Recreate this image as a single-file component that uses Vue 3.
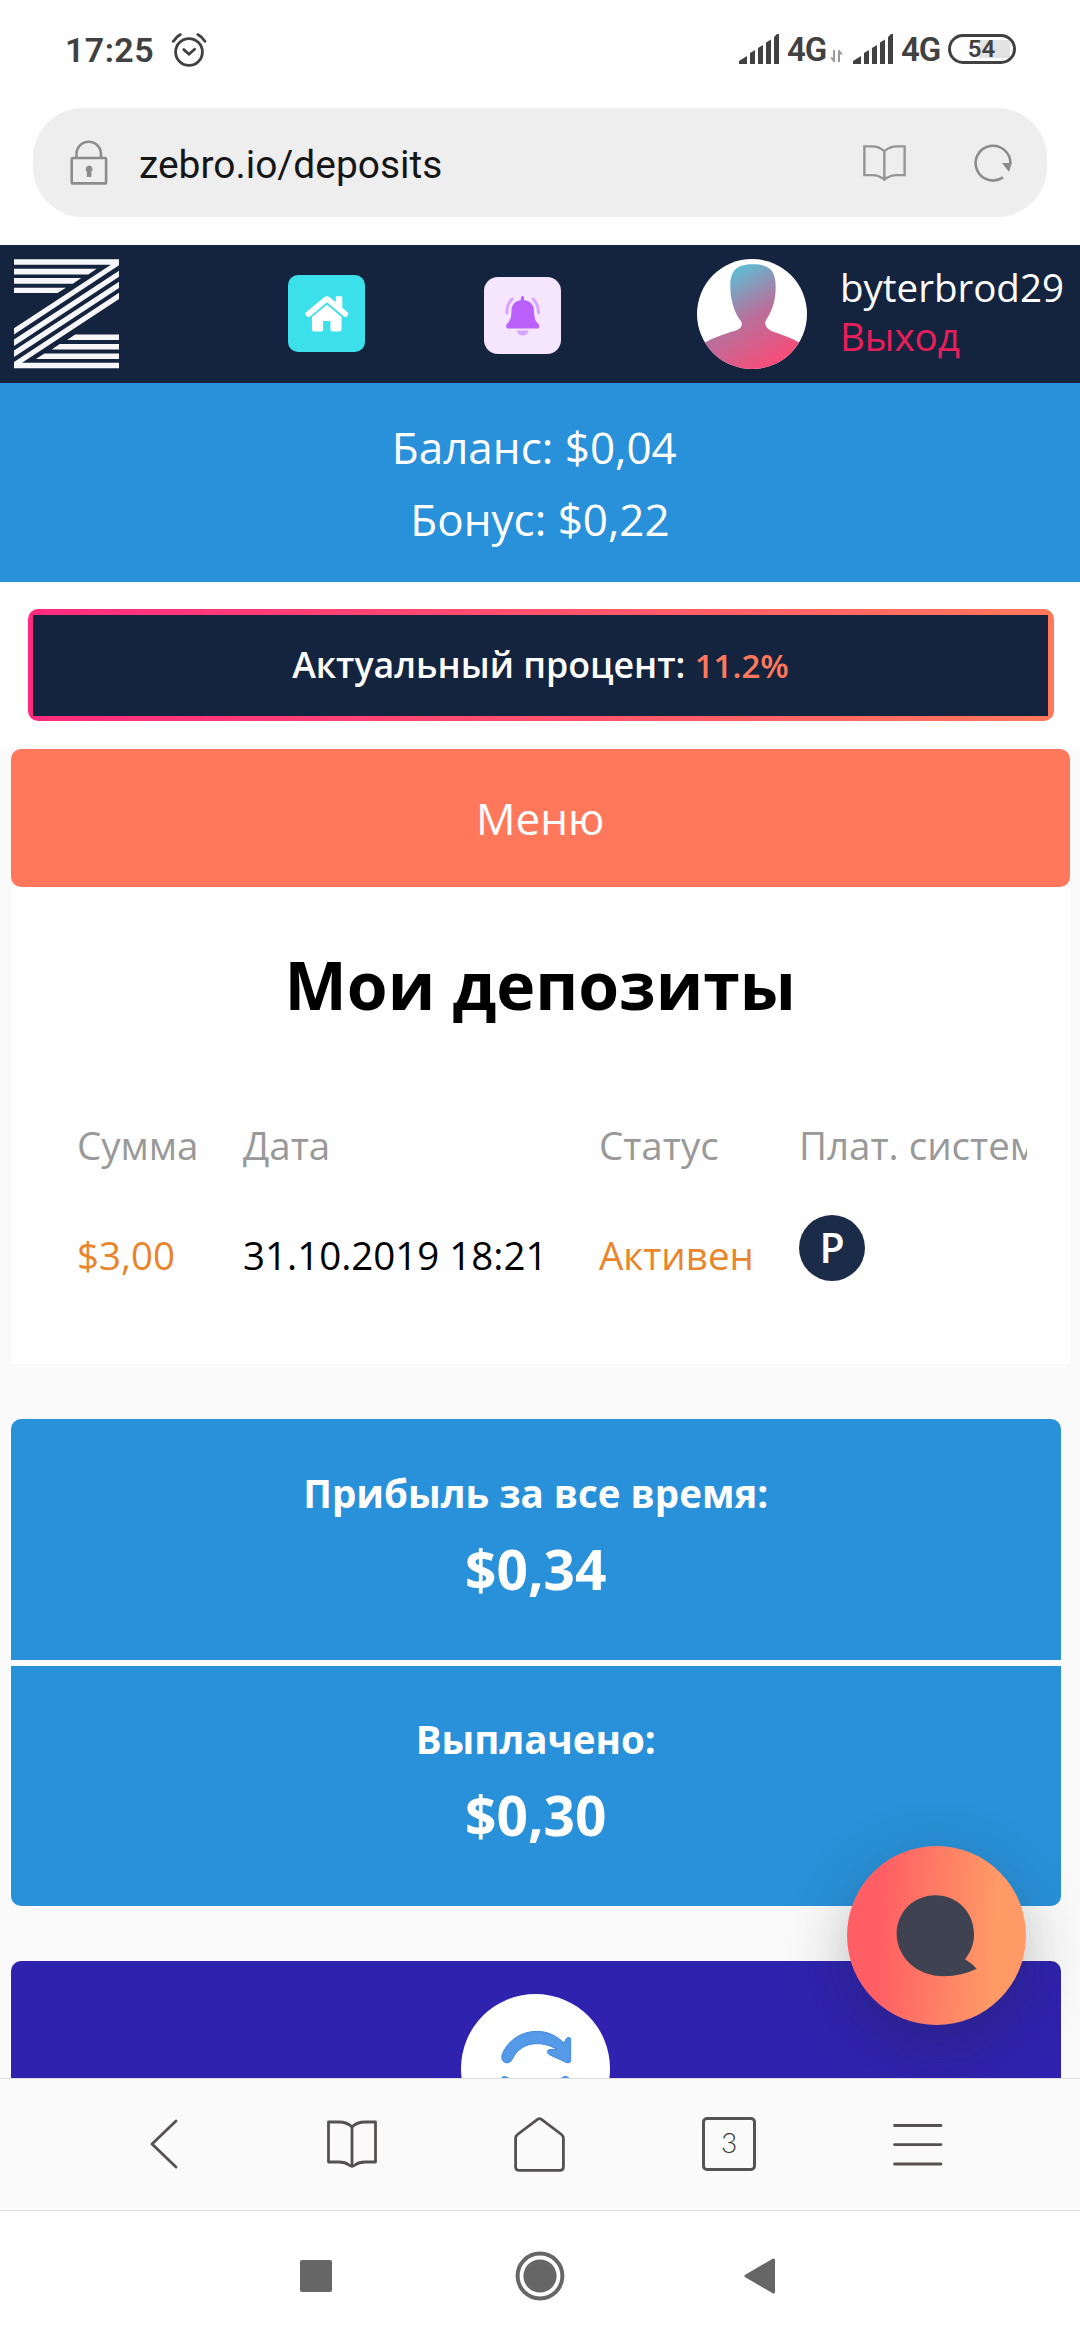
<script setup>

import { ref } from 'vue'

const user = ref({
    name: 'byterbrod29',
    balance: '$0,04',
    bonus: '$0,22',
})

const percent = ref('11.2%')

const titres = ['Сумма', 'Дата', 'Статус', 'Плат. система']

const deposits = ref([
    { sum: '$3,00', date: '31.10.2019 18:21', status: 'Активен' },
])

const stats = ref([
    { label: 'Прибыль за все время:', value: '$0,34' },
    { label: 'Выплачено:', value: '$0,30' },
])

</script>

<template>

<div class="phone">
    <div class="status">
        <span class="time">17:25</span>
        <svg class="alarm" width="36" height="36" viewBox="0 0 36 36">
            <circle cx="18" cy="20" r="13.4" />
            <path d="M12.8 17.6 L18 22.2 L23.6 17.2" />
            <path d="M2.2 9.4 Q5 5 9.4 2.6 M26.8 2.6 Q31.4 5 34 9.4" />
        </svg>
        <div class="status__right">
            <template v-for="n in 2" :key="n">
                <svg class="signal" width="40" height="30" viewBox="0 0 40 30">
                    <path d="M0 30 V27 L8 22 V30Z M11 30 V19 L16 16 V30Z M19 30 V14 L24 11 V30Z M27 30 V8.5 L32 5.5 V30Z M35 30 V3 L38 0 H40 V30Z" />
                </svg>
                <span class="net">4G</span>
                <svg v-if="n === 1" class="updown" width="13" height="12" viewBox="0 0 13 12">
                    <path d="M5 0 V12 H3.6 L0 7.6 H3 V0Z M8 12 V0 H9.4 L13 4.4 H10 V12Z" />
                </svg>
            </template>
            <div class="battery">54</div>
        </div>
    </div>

    <div class="url">
        <svg class="lock" width="38" height="45" viewBox="0 0 38 45">
            <path d="M6.5 18 V14 A12.2 12.2 0 0 1 31 14 V18" />
            <rect x="1.7" y="18" width="34.4" height="25.4" rx="1" />
            <path class="plein" d="M19 25.5 a3.6 3.6 0 0 1 2.4 6.2 V37 h-4.6 v-5.3 A3.6 3.6 0 0 1 19 25.5Z" />
        </svg>
        <span class="url__text">zebro.io/deposits</span>
        <svg class="url__book" width="43" height="36" viewBox="938 436 125 109" preserveAspectRatio="none">
            <path d="M942 440 H965 Q985 440 1000 455 Q1015 440 1037 440 H1059 V527 H1037 Q1015 527 1000 541 Q985 527 965 527 H942Z M1000 455 V541" />
        </svg>
        <svg class="url__reload" width="40" height="40" viewBox="0 0 40 40">
            <path d="M37.4 21 A17.4 17.4 0 1 0 30 34.4" />
            <path class="plein" d="M29 20 H38.8 L36 29Z" />
        </svg>
    </div>

    <div class="page">
        <header>
            <svg class="logo" width="105" height="110" viewBox="38 70 273 329" preserveAspectRatio="none">
                <path d="M38 71 H311 V89 L38 296 V277 L290 87 H38Z" />
                <path d="M38 99 H253 L231 116 H38Z M38 127 H213 L191 144 H38Z M38 156 H173 L151 172 H38Z" />
                <path d="M311 105 V123 L38 330 V311Z M311 138 V157 L38 363 V344Z" />
                <path d="M311 171 V190 L59 380 H311 V397 H38 V378Z" />
                <path d="M311 296 V312 H176 L197 296Z M311 324 V341 H136 L157 324Z M311 353 V369 H95 L117 353Z" />
            </svg>
            <div class="btn btn--home">
                <svg width="43.5" height="35.5" viewBox="792 182 113 106" preserveAspectRatio="none">
                    <path d="M849 208 L887 245 V282 Q887 288 881 288 H863 Q858 288 858 283 V257 H839 V283 Q839 288 834 288 H816 Q810 288 810 282 V245Z" />
                    <path d="M842 186 Q849 180 856 186 L872 201 V186 Q872 183 875 183 H886 Q889 183 889 186 V217 L903 231 Q907 235 903 239 L901 243 Q897 247 893 243 L849 201 L805 243 Q800 247 797 243 L794 239 Q790 235 794 231Z" />
                </svg>
            </div>
            <div class="btn btn--bell">
                <svg width="35" height="39.5" viewBox="1319 182 92 118" preserveAspectRatio="none">
                    <path fill="#d7a5fd" d="M1350 285 H1381 Q1378 300 1365 300 Q1353 300 1350 285Z" />
                    <path fill="none" stroke="#d7a5fd" stroke-width="8" stroke-linecap="round" d="M1338 191 Q1323 207 1324 233 M1393 191 Q1407 207 1407 233" />
                    <path fill="#bb60fa" d="M1361 194 V187 Q1361 182 1365 182 Q1369 182 1369 187 V194 Q1395 198 1395 226 Q1395 255 1406 264 Q1409 267 1409 272 Q1409 279 1402 279 H1330 Q1322 279 1322 272 Q1322 267 1325 264 Q1336 255 1336 226 Q1336 198 1361 194Z" />
                </svg>
            </div>
            <svg class="avatar" width="110" height="110" viewBox="291 72 330 330">
                <defs>
                    <linearGradient id="peau" gradientUnits="userSpaceOnUse" x1="385" y1="100" x2="545" y2="375">
                        <stop offset="0" stop-color="#56c3d8" />
                        <stop offset="0.5" stop-color="#b8709c" />
                        <stop offset="1" stop-color="#f84c78" />
                    </linearGradient>
                </defs>
                <path fill="url(#peau)" d="M291 338 C340 305 375 298 400 289 C422 282 431 271 423 259 C400 228 391 190 391 155 C391 105 410 88 459 88 C508 88 527 105 527 155 C527 200 515 230 498 255 C491 268 500 283 520 290 C550 300 585 311 621 338 V402 H291Z" />
            </svg>
            <div class="user">
                <div>{{ user.name }}</div>
                <div class="exit">Выход</div>
            </div>
        </header>

        <div class="balance">
            <div>Баланс: {{ user.balance }}&nbsp;</div>
            <div>Бонус: {{ user.bonus }}</div>
        </div>

        <div class="percent">
            <div class="percent__in">Актуальный процент: <span>{{ percent }}</span></div>
        </div>

        <div class="content">
            <div class="menu">Меню</div>

            <div class="card">
                <h1>Мои депозиты</h1>
                <div class="table">
                    <div class="row row--head">
                        <span v-for="t in titres" :key="t">{{ t }}</span>
                    </div>
                    <div class="row" v-for="d in deposits" :key="d.date">
                        <span class="orange">{{ d.sum }}</span>
                        <span>{{ d.date }}</span>
                        <span class="orange">{{ d.status }}</span>
                        <span class="coin">P</span>
                    </div>
                </div>
            </div>

            <div class="stats">
                <div class="stat" v-for="s in stats" :key="s.label">
                    <div class="stat__label">{{ s.label }}</div>
                    <div class="stat__value">{{ s.value }}</div>
                </div>
            </div>

            <div class="reinvest">
                <svg class="rond" width="149" height="149" viewBox="123 281 447 447">
                    <g fill="#5599e9" stroke="#4389dc" stroke-width="3">
                        <path d="M246 464 C262 420 305 393 350 393 C385 393 412 408 432 428 L438 416 Q445 407 452 414 V482 Q450 490 441 487 L388 463 Q378 455 386 448 L410 447 C390 434 370 430 350 430 C318 430 290 448 279 473 Q272 488 260 488 Q242 484 246 464Z" />
                        <path transform="rotate(180 348.5 508)" d="M246 464 C262 420 305 393 350 393 C385 393 412 408 432 428 L438 416 Q445 407 452 414 V482 Q450 490 441 487 L388 463 Q378 455 386 448 L410 447 C390 434 370 430 350 430 C318 430 290 448 279 473 Q272 488 260 488 Q242 484 246 464Z" />
                    </g>
                </svg>
            </div>
        </div>

        <div class="chat">
            <svg width="179" height="179" viewBox="81 78 537 537">
                <path d="M346 226 C412 226 462 278 462 342 C462 372 452 396 435 418 Q455 430 470 446 Q425 468 372 469 C290 469 230 410 230 342 C230 276 282 226 346 226Z" />
            </svg>
        </div>
    </div>

    <div class="toolbar">
        <svg width="28" height="50" viewBox="0 0 28 50"><path d="M26 2 L2 25 L26 48" /></svg>
        <svg class="toolbar__book" width="50" height="48" viewBox="0 0 50 48">
            <path d="M1.5 2 H12 Q20 2 25 7 Q30 2 38 2 H48.5 V42 H38 Q32 42 28 45 Q25 47.4 22 45 Q18 42 12 42 H1.5Z M25 7 V46" />
        </svg>
        <svg width="51" height="55" viewBox="0 0 51 55">
            <path d="M23.5 2.3 Q25.5 1 27.5 2.3 L47.5 17.5 Q49.4 19 49.4 21.5 V50 Q49.4 53.4 46 53.4 H5 Q1.6 53.4 1.6 50 V21.5 Q1.6 19 3.5 17.5Z" />
        </svg>
        <div class="tabs">3</div>
        <svg width="50" height="43" viewBox="0 0 50 43"><path d="M1.5 2.5 H48 M1.5 21.6 H48 M1.5 41 H48" /></svg>
    </div>

    <div class="nav">
        <div class="carre"></div>
        <svg class="nav__home" width="50" height="50" viewBox="0 0 50 50">
            <circle cx="25" cy="25" r="22.4" fill="none" stroke="#666" stroke-width="4" />
            <circle cx="25" cy="25" r="16.6" fill="#666" />
        </svg>
        <svg class="nav__back" width="32" height="38" viewBox="0 0 32 38">
            <path d="M2 19 L29.5 3 V35Z" fill="#666" stroke="#666" stroke-width="3" stroke-linejoin="round" />
        </svg>
    </div>
</div>

</template>

<style>
body {
    margin: 0;
    background: #fff;
}
</style>

<style scoped>

.phone {
    width: 1080px;
    height: 2340px;
    display: flex;
    flex-direction: column;
    overflow: hidden;
    background: #fefefe;
    font-family: 'Open Sans', 'Noto Sans', sans-serif;
}

svg {
    display: block;
    flex: none;
    overflow: visible;
}

/* barre de statut */
.status {
    height: 100px;
    flex: none;
    display: flex;
    align-items: center;
    padding: 0 64px 0 65px;
    font-family: Roboto, sans-serif;
    font-weight: 600;
    color: #414141;
}

.time {
    font-size: 34px;
    width: 106px;
    letter-spacing: 0.4px;
}

.alarm {
    fill: none;
    stroke: #414141;
    stroke-width: 2.8;
    stroke-linecap: round;
}

.status__right {
    margin-left: auto;
    display: flex;
    align-items: center;
}

.signal {
    fill: #414141;
    margin-top: -3px;
}

.net {
    font-size: 33px;
    width: 42px;
    margin-left: 8px;
    margin-top: -1px;
    letter-spacing: -1px;
}

.updown {
    fill: #999;
    margin: 12px 10px 0 1px;
}

.battery {
    box-sizing: border-box;
    width: 68px;
    height: 30px;
    margin-left: 5px;
    margin-top: -2px;
    border: 3px solid #414141;
    border-radius: 15px;
    background: linear-gradient(#e3e3e3, #e3e3e3) 28px 3px / 31px 18px no-repeat;
    font-size: 24px;
    line-height: 24px;
    text-align: center;
    padding-right: 1px;
}

/* barre d'adresse */
.url {
    height: 109px;
    flex: none;
    margin: 8px 33px 28px;
    padding: 0 34px 0 37px;
    box-sizing: border-box;
    display: flex;
    align-items: center;
    border-radius: 50px;
    background: #eee;
    font-family: Roboto, sans-serif;
    font-size: 38.9px;
    color: #161616;
}

.url svg {
    fill: none;
    stroke: #8c8c8c;
    stroke-width: 2.6;
}

.url .url__book {
    margin-left: auto;
    margin-right: 67px;
    stroke: #959595;
    stroke-width: 7;
}

.url .plein {
    fill: #8c8c8c;
    stroke: none;
}

.url__text {
    margin-left: 31px;
    padding-top: 4px;
}

/* page */
.page {
    position: relative;
    height: 1833px;
    flex: none;
    overflow: hidden;
}

header {
    height: 138px;
    display: flex;
    align-items: center;
    padding-left: 14px;
    background: #14243f;
}

.logo {
    fill: #f7f7fa;
    margin-top: -1px;
}

.btn {
    width: 77px;
    height: 77px;
    flex: none;
    display: flex;
    align-items: center;
    justify-content: center;
}

.btn--home {
    margin: -1px 119px 0 169px;
    border-radius: 10px;
    background: #3be0eb;
    fill: #fff;
}

.btn--bell {
    margin: 3px 136px 0 0;
    border-radius: 14px;
    background: #f5e5fd;
}

.avatar {
    border-radius: 50%;
    overflow: hidden;
    background: #fff;
}

.user {
    margin: -5px 0 0 33px;
    font-size: 38.5px;
    line-height: 49px;
    color: #fff;
}

.exit {
    color: #e91e5b;
}

.balance {
    height: 199px;
    box-sizing: border-box;
    padding-top: 28px;
    background: #2991d9;
    color: #fff;
    font-size: 44px;
    line-height: 72px;
    text-align: center;
}

.percent {
    height: 112px;
    box-sizing: border-box;
    margin: 27px 26px 28px 28px;
    padding: 6px 6px 5px 5px;
    border-radius: 10px;
    background: linear-gradient(90deg, #ff2a80, #ff785b);
}

.percent__in {
    height: 101px;
    line-height: 99px;
    background: #14243f;
    color: #fff;
    font-size: 35.75px;
    font-weight: 600;
    text-align: center;
}

.percent span {
    color: #ff785b;
    font-size: 33px;
}

.content {
    background: #fafafa;
    height: 1329px;
    padding: 0 10.5px 0 11px;
}

.menu {
    height: 138px;
    line-height: 139px;
    border-radius: 10px;
    background: #ff785b;
    color: #fff;
    font-size: 44px;
    text-align: center;
}

.card {
    height: 477px;
    box-sizing: border-box;
    padding: 0 43px 0 66px;
    background: #fefefe;
}

h1 {
    margin: 0 -43px 0 -66px;
    padding-top: 52px;
    font-size: 66px;
    line-height: 90px;
    text-align: center;
    color: #000;
}

.table {
    margin-top: 61px;
    overflow: hidden;
    font-size: 38.5px;
    line-height: 110px;
    color: #000;
}

.row {
    display: grid;
    grid-template-columns: 166px 356px 200px 300px;
    white-space: nowrap;
}

.row--head {
    color: #999;
}

.orange {
    color: #e9852b;
}

.coin {
    width: 66px;
    height: 66px;
    margin-top: 15px;
    line-height: 65px;
    border-radius: 50%;
    background: #1b2c48;
    color: #fff;
    font-weight: 600;
    text-align: center;
    font-size: 41px;
}

.stats {
    margin: 55px 9px 55px 0;
    display: flex;
    flex-direction: column;
    gap: 6px;
    border-radius: 10px;
    overflow: hidden;
}

.stat {
    height: 240.5px;
    box-sizing: border-box;
    padding-top: 46.5px;
    background: #2991d9;
    color: #fff;
    font-weight: 700;
    text-align: center;
}

.stat__label {
    font-size: 38.5px;
    line-height: 54px;
}

.stat__value {
    font-size: 55px;
    line-height: 98px;
}

.reinvest {
    height: 300px;
    margin-right: 9px;
    display: flex;
    justify-content: center;
    border-radius: 10px;
    background: #2f22ae;
}

.rond {
    margin-top: 33px;
    border-radius: 50%;
    background: #fff;
}

.chat {
    position: absolute;
    right: 54px;
    bottom: 53px;
    width: 179px;
    height: 179px;
    border-radius: 50%;
    background: linear-gradient(93deg, #ff5f64 20%, #ff9966 80%);
    box-shadow: 0 20px 64px rgba(34, 35, 40, 0.3);
    fill: #3f4250;
}

/* barre du navigateur */
.toolbar {
    height: 133px;
    flex: none;
    box-sizing: border-box;
    border-top: 1px solid #dcdcdc;
    border-bottom: 1px solid #e0e0e0;
    background: #fafafa;
    display: flex;
    align-items: center;
    gap: 137px;
    padding: 0 0 1px 150px;
}

.toolbar svg {
    fill: none;
    stroke: #565151;
    stroke-width: 2.8;
    stroke-linecap: round;
    stroke-linejoin: round;
}

.toolbar .toolbar__book {
    margin-left: 12px;
}

.tabs {
    width: 54px;
    height: 54px;
    box-sizing: border-box;
    border: 3px solid #565353;
    border-radius: 5px;
    font-family: Lato, sans-serif;
    font-weight: 300;
    font-size: 28px;
    line-height: 45px;
    text-align: center;
    color: #333;
}

.nav {
    flex: 1;
    display: flex;
    align-items: center;
    padding-left: 300px;
}

.nav__home {
    margin: 0 179px 0 183px;
}

.carre {
    width: 32px;
    height: 32px;
    border-radius: 2px;
    background: #666;
}

</style>
